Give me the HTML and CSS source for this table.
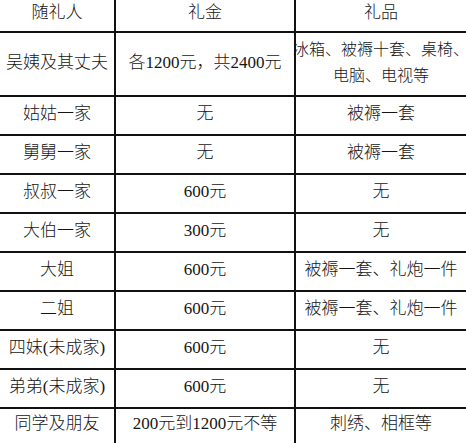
FILE: index.html
```html
<!DOCTYPE html>
<html lang="zh-CN">
<head>
<meta charset="utf-8">
<title>随礼表</title>
<link rel="stylesheet" href="styles.css">
</head>
<body>
<div class="table">
  <div class="cell head">随礼人</div>
  <div class="cell head">礼金</div>
  <div class="cell head">礼品</div>

  <div class="cell tall">吴姨及其丈夫</div>
  <div class="cell tall">各1200元，共2400元</div>
  <div class="cell tall multi"><span class="lines">冰箱、被褥十套、桌椅、<br>电脑、电视等</span></div>

  <div class="cell">姑姑一家</div>
  <div class="cell">无</div>
  <div class="cell">被褥一套</div>

  <div class="cell">舅舅一家</div>
  <div class="cell">无</div>
  <div class="cell">被褥一套</div>

  <div class="cell">叔叔一家</div>
  <div class="cell">600元</div>
  <div class="cell">无</div>

  <div class="cell">大伯一家</div>
  <div class="cell">300元</div>
  <div class="cell">无</div>

  <div class="cell">大姐</div>
  <div class="cell">600元</div>
  <div class="cell">被褥一套、礼炮一件</div>

  <div class="cell">二姐</div>
  <div class="cell">600元</div>
  <div class="cell">被褥一套、礼炮一件</div>

  <div class="cell">四妹(未成家)</div>
  <div class="cell">600元</div>
  <div class="cell">无</div>

  <div class="cell">弟弟(未成家)</div>
  <div class="cell">600元</div>
  <div class="cell">无</div>

  <div class="cell">同学及朋友</div>
  <div class="cell">200元到1200元不等</div>
  <div class="cell">刺绣、相框等</div>
</div>
</body>
</html>
```
FILE: styles.css
```css
html, body {
  margin: 0;
  padding: 0;
  background: #ffffff;
  overflow: hidden;
}

.table {
  display: grid;
  grid-template-columns: 114px 178px 170px;
  grid-template-rows: 31px 62px repeat(8, 37px) 34px;
  gap: 2px;
  background: #111111;
  width: 466px;
  font-family: "Liberation Serif", "Noto Sans CJK SC", serif;
  font-size: 17px;
  font-weight: 300;
  color: #151515;
}

.cell {
  background: #ffffff;
  display: flex;
  align-items: center;
  justify-content: center;
  text-align: center;
  white-space: nowrap;
  line-height: 26px;
  padding-bottom: 4px;
  box-sizing: border-box;
  min-width: 0;
}

.head {
  padding-bottom: 6px;
}

.tall {
  padding-bottom: 2px;
}

.table .multi {
  font-size: 16px;
}

.lines {
  display: block;
  text-align: center;
}
```
